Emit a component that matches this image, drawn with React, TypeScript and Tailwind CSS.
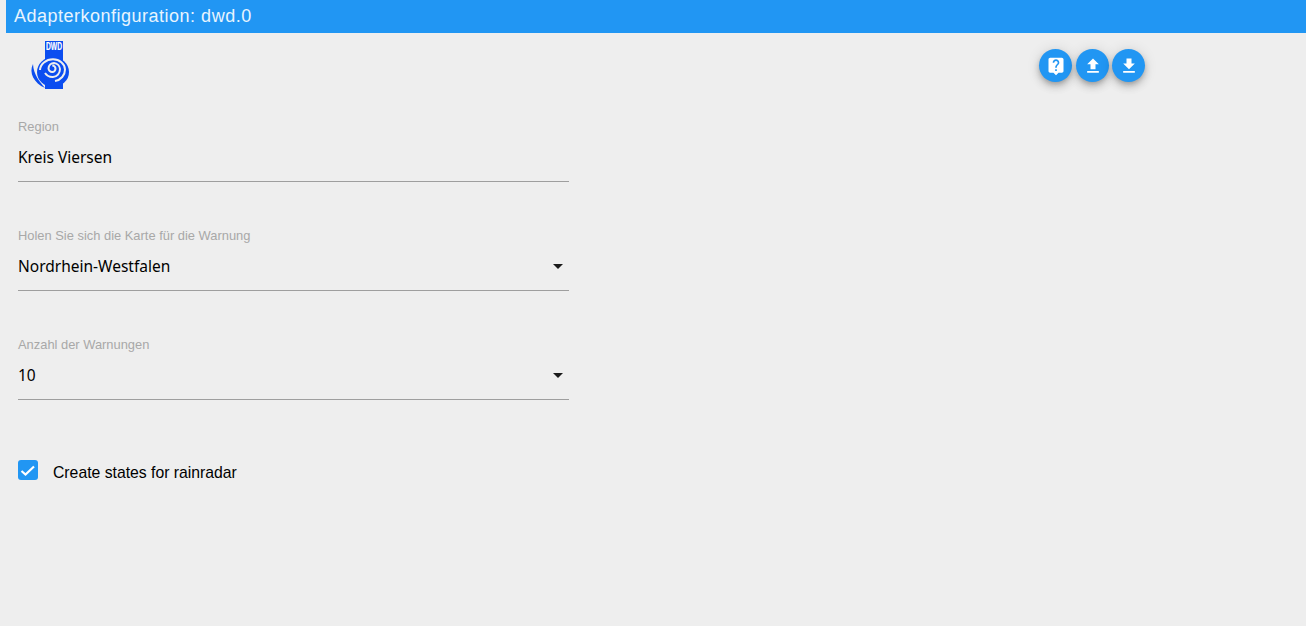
import React from 'react';

const sans = "font-['Liberation_Sans',Arial,sans-serif]";
const noto = "font-['Noto_Sans',sans-serif]";

const DwdLogo = () => (
  <svg viewBox="0 0 50 50" className="w-[50px] h-[50px]">
    <rect x="20" y="1" width="18" height="48" fill="#0b4df0" />
    <text x="29" y="9.5" textAnchor="middle" fill="#fff" stroke="#fff" strokeWidth="0.2" fontSize="10.5" fontWeight="700" fontFamily="Liberation Sans, sans-serif" textLength="16" lengthAdjust="spacingAndGlyphs">DWD</text>
    <ellipse cx="28" cy="32" rx="16" ry="15" fill="#0b4df0" />
    <path d="M8 24 C3.5 33 9 43 20 48 C15 42 8.5 35 8 24 Z" fill="#0b4df0" />
    <path
      d="M27.3 25.5 A3.2 3.2 0 0 1 30.5 28.7 A3.2 3.2 0 0 1 27.3 31.9 A3.6 3.6 0 0 1 23.5 28.5 A5.5 6 0 0 1 29 23 A6.5 6.5 0 0 1 35 29 A7 8 0 0 1 28 37 A9 9 0 0 1 20 33"
      fill="none"
      stroke="#eeeeee"
      strokeWidth="2"
    />
    <path d="M15 30 A13 11 0 0 1 28 19.3 A12 10.5 0 0 1 40 29.5 A12 11.5 0 0 1 30 41" fill="none" stroke="#eeeeee" strokeWidth="2" />
  </svg>
);

const RoundButton = ({ d, className = '' }: { d: string; className?: string }) => (
  <button className={`w-[33px] h-[33px] rounded-full bg-[#2196f3] flex items-center justify-center shadow-[0_3px_5px_-1px_rgba(0,0,0,0.2),0_5px_8px_0_rgba(0,0,0,0.14),0_1px_14px_0_rgba(0,0,0,0.12)] ${className}`}>
    <svg viewBox="0 0 24 24" className="w-5 h-5" fill="#fff">
      <path d={d} />
    </svg>
  </button>
);

const Field = ({ label, value, select }: { label: string; value: string; select?: boolean }) => (
  <div className="w-[551px] h-[63px] mb-[46px] border-b border-[#9e9e9e] relative">
    <div className={`${sans} text-[12.9px] leading-[15px] text-[#a8a8a8]`}>{label}</div>
    <div className={`${noto} text-[15.5px] leading-[22px] text-black mt-[12px]`}>{value}</div>
    {select && (
      <svg viewBox="0 0 10 5" className="absolute right-[6px] top-[36px] w-[10px] h-[5px]" fill="#1a1a1a">
        <path d="M0 0h10L5 5z" />
      </svg>
    )}
  </div>
);

export default function App() {
  return (
    <div className="min-h-screen bg-[#eeeeee] pl-[6px] overflow-hidden">
      <header className={`${sans} h-[33px] bg-[#2196f3] px-2 flex items-center text-[18px] tracking-[0.5px] text-[#e8f4fe]`}>
        Adapterkonfiguration: dwd.0
      </header>

      <div className="flex justify-between h-[86px] pt-[7px] pl-[19px] pr-[161px]">
        <DwdLogo />
        <div className="flex gap-[3px] mt-[9px] h-[33px]">
          <RoundButton className="mr-[1px]" d="M19 2H5c-1.11 0-2 .9-2 2v14c0 1.1.89 2 2 2h4l3 3 3-3h4c1.1 0 2-.9 2-2V4c0-1.1-.9-2-2-2zm-6 16h-2v-2h2v2zm2.07-7.75l-.9.92C13.45 11.9 13 12.5 13 14h-2v-.5c0-1.1.45-2.1 1.17-2.83l1.24-1.26c.37-.36.59-.86.59-1.41 0-1.1-.9-2-2-2s-2 .9-2 2H8c0-2.21 1.79-4 4-4s4 1.79 4 4c0 .88-.36 1.68-.93 2.25z" />
          <RoundButton d="M9 16h6v-6h4l-7-7-7 7h4zm-4 2h14v2H5z" />
          <RoundButton d="M19 9h-4V3H9v6H5l7 7 7-7zM5 18v2h14v-2H5z" />
        </div>
      </div>

      <div className="pl-[12px]">
        <Field label="Region" value="Kreis Viersen" />
        <Field label="Holen Sie sich die Karte für die Warnung" value="Nordrhein-Westfalen" select />
        <Field label="Anzahl der Warnungen" value="10" select />

        <label className="flex items-start mt-[60px]">
          <span className="w-5 h-5 rounded-[3px] bg-[#2196f3] block">
            <svg viewBox="0 0 20 20" className="w-5 h-5" fill="none" stroke="#fff" strokeWidth="2.2">
              <path d="M3.5 11 L7.5 14.5 L16 6.5" />
            </svg>
          </span>
          <span className={`${sans} ml-[15px] text-[15.75px] leading-[26px] text-black`}>Create states for rainradar</span>
        </label>
      </div>
    </div>
  );
}
